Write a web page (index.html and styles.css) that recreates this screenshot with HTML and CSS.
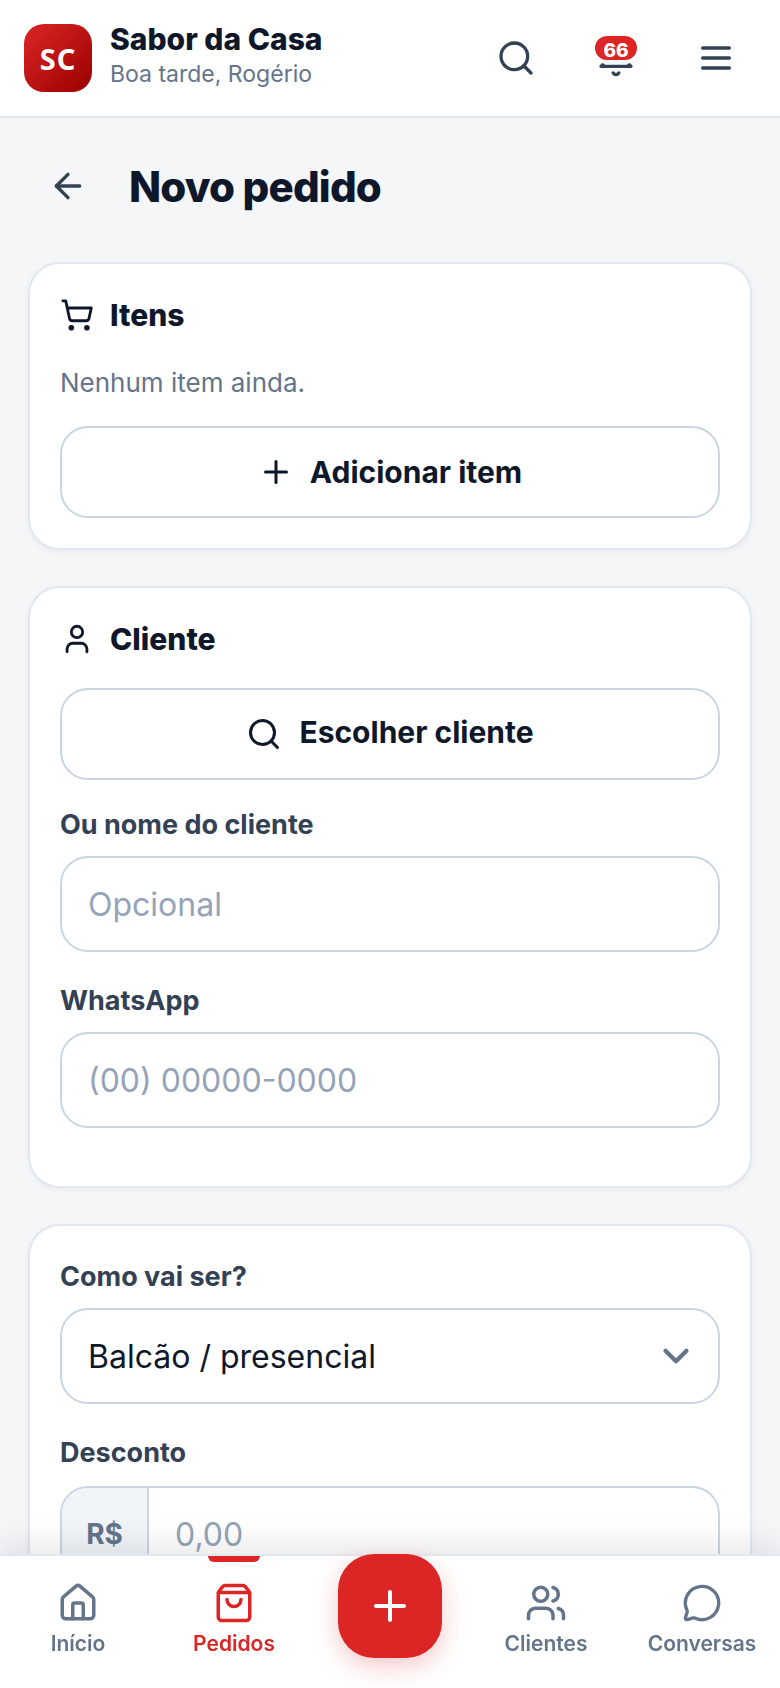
FILE: index.html
```html
<!DOCTYPE html>
<html lang="pt-BR">
<head>
<meta charset="utf-8">
<title>Novo pedido</title>
<link rel="stylesheet" href="styles.css">
</head>
<body>
<header class="topbar">
  <div class="brand">
    <div class="logo">SC</div>
    <div class="brand-text">
      <div class="brand-name">Sabor da Casa</div>
      <div class="brand-sub">Boa tarde, Rogério</div>
    </div>
  </div>
  <div class="top-actions">
    <button class="icon-btn" type="button"><svg class="ic40" viewBox="0 0 24 24"><path d="m21 21-4.34-4.34"/><circle cx="11" cy="11" r="8"/></svg></button>
    <button class="icon-btn" type="button"><svg class="ic40" viewBox="0 0 24 24"><path d="M10.3 21a1.94 1.94 0 0 0 3.4 0"/><path d="M6 8a6 6 0 0 1 12 0c0 7 3 9 3 9H3s3-2 3-9"/></svg><span class="badge">66</span></button>
    <button class="icon-btn" type="button"><svg class="ic40" viewBox="0 0 24 24"><path d="M4 6h16"/><path d="M4 12h16"/><path d="M4 18h16"/></svg></button>
  </div>
</header>

<main class="page">
  <div class="page-head">
    <button class="back" type="button"><svg class="ic40" viewBox="0 0 24 24"><path d="m12 19-7-7 7-7"/><path d="M19 12H5"/></svg></button>
    <h1>Novo pedido</h1>
  </div>

  <section class="card card-items">
    <div class="card-title"><svg class="ic34" viewBox="0 0 24 24"><circle cx="8" cy="21" r="1"/><circle cx="19" cy="21" r="1"/><path d="M2.05 2.05h2l2.66 12.42a2 2 0 0 0 2 1.58h9.78a2 2 0 0 0 1.95-1.57l1.65-7.43H5.12"/></svg><h2>Itens</h2></div>
    <p class="empty">Nenhum item ainda.</p>
    <button class="btn" type="button"><svg class="ic36" viewBox="0 0 24 24"><path d="M5 12h14"/><path d="M12 5v14"/></svg>Adicionar item</button>
  </section>

  <section class="card card-client">
    <div class="card-title"><svg class="ic34" viewBox="0 0 24 24"><path d="M19 21v-2a4 4 0 0 0-4-4H9a4 4 0 0 0-4 4v2"/><circle cx="12" cy="7" r="4"/></svg><h2>Cliente</h2></div>
    <button class="btn btn-search" type="button"><svg class="ic36" viewBox="0 0 24 24"><path d="m21 21-4.34-4.34"/><circle cx="11" cy="11" r="8"/></svg><span class="btn-text">Escolher cliente</span></button>
    <label class="label">Ou nome do cliente</label>
    <div class="field placeholder">Opcional</div>
    <label class="label">WhatsApp</label>
    <div class="field placeholder">(00) 00000-0000</div>
  </section>

  <section class="card card-order">
    <label class="label first">Como vai ser?</label>
    <div class="field select">Balcão / presencial<svg class="ic42 chev" viewBox="0 0 24 24"><path d="m6 9 6 6 6-6"/></svg></div>
    <label class="label">Desconto</label>
    <div class="group">
      <div class="prefix">R$</div>
      <div class="group-input placeholder">0,00</div>
    </div>
  </section>
</main>

<nav class="bottom-nav">
  <a class="nav-item"><svg class="ic42" viewBox="0 0 24 24"><path d="M15 21v-8a1 1 0 0 0-1-1h-4a1 1 0 0 0-1 1v8"/><path d="M3 10a2 2 0 0 1 .709-1.528l7-6a2 2 0 0 1 2.582 0l7 6A2 2 0 0 1 21 10v9a2 2 0 0 1-2 2H5a2 2 0 0 1-2-2z"/></svg><span>Início</span></a>
  <a class="nav-item active"><svg class="ic42" viewBox="0 0 24 24"><path d="M16 10a4 4 0 0 1-8 0"/><path d="M3.103 6.034h17.794"/><path d="M3.4 5.467a2 2 0 0 0-.4 1.2V20a2 2 0 0 0 2 2h14a2 2 0 0 0 2-2V6.667a2 2 0 0 0-.4-1.2l-2-2.667A2 2 0 0 0 17 2H7a2 2 0 0 0-1.6.8z"/></svg><span>Pedidos</span></a>
  <div class="nav-fab-cell"><button class="fab" type="button"><svg class="ic48" viewBox="0 0 24 24"><path d="M5 12h14"/><path d="M12 5v14"/></svg></button></div>
  <a class="nav-item"><svg class="ic42" viewBox="0 0 24 24"><path d="M16 21v-2a4 4 0 0 0-4-4H6a4 4 0 0 0-4 4v2"/><path d="M16 3.128a4 4 0 0 1 0 7.744"/><path d="M22 21v-2a4 4 0 0 0-3-3.87"/><circle cx="9" cy="7" r="4"/></svg><span>Clientes</span></a>
  <a class="nav-item"><svg class="ic40 msg" viewBox="0 0 24 24"><path d="M2.992 16.342a2 2 0 0 1 .094 1.167l-1.065 3.29a1 1 0 0 0 1.236 1.168l3.413-.998a2 2 0 0 1 1.099.092 10 10 0 1 0-4.777-4.719"/></svg><span>Conversas</span></a>
</nav>
</body>
</html>
```
FILE: styles.css
```css
* { box-sizing: border-box; }
html, body { margin: 0; padding: 0; overflow: hidden; }
body {
  width: 780px;
  height: 1688px;
  position: relative;
  background: #f5f6f8;
  font-family: Inter, "Liberation Sans", sans-serif;
  color: #0f172a;
}
svg {
  fill: none;
  stroke: currentColor;
  stroke-width: 2;
  stroke-linecap: round;
  stroke-linejoin: round;
  flex: none;
  display: block;
}
button { font-family: inherit; background: none; border: 0; padding: 0; color: inherit; }
.ic34 { width: 34px; height: 34px; }
.ic36 { width: 36px; height: 36px; }
.ic40 { width: 40px; height: 40px; }
.ic42 { width: 42px; height: 42px; }
.ic48 { width: 48px; height: 48px; }
.msg { margin: 1px 0; }

.topbar {
  height: 118px;
  background: #fff;
  border-bottom: 2px solid #e2e8f0;
  display: flex;
  align-items: center;
  justify-content: space-between;
  padding: 0 20px 0 24px;
}
.brand { display: flex; align-items: center; gap: 18px; }
.logo {
  width: 68px;
  height: 68px;
  border-radius: 20px;
  background: linear-gradient(135deg, #dc2626, #990000);
  color: #fff;
  font-family: "Noto Sans", sans-serif;
  font-size: 29px;
  font-weight: 700;
  letter-spacing: 1px;
  display: flex;
  align-items: center;
  justify-content: center;
}
.brand-text { padding-bottom: 6px; }
.brand-name { font-size: 30px; font-weight: 800; line-height: 37px; }
.brand-sub { font-size: 23px; line-height: 32px; color: #64748b; }
.top-actions { display: flex; gap: 12px; }
.icon-btn {
  position: relative;
  width: 88px;
  height: 88px;
  display: flex;
  align-items: center;
  justify-content: center;
  color: #334155;
}
.badge {
  position: absolute;
  left: 23px;
  top: 22px;
  width: 42px;
  height: 24px;
  border-radius: 12px;
  background: #dc2626;
  box-shadow: 0 0 0 4px #fff;
  color: #fff;
  font-size: 19px;
  font-weight: 800;
  line-height: 30px;
  text-align: center;
}

.page { padding: 0 28px; height: 1570px; overflow: hidden; }
.page-head {
  height: 144px;
  display: flex;
  align-items: center;
  gap: 41px;
  padding: 0 0 8px 20px;
}
.back { width: 40px; height: 40px; color: #334155; }
h1 { margin: 0; font-size: 42px; font-weight: 800; letter-spacing: -0.02em; }

.card {
  background: #fff;
  border: 2px solid #e2e8f0;
  border-radius: 32px;
  box-shadow: 0 2px 6px rgba(15, 23, 42, .05);
  padding: 25px 30px 0;
  margin-bottom: 36px;
}
.card-items { height: 288px; }
.card-client { height: 602px; }
.card-order { height: 600px; }
.card-title { display: flex; align-items: center; gap: 16px; height: 52px; color: #0f172a; }
h2 { margin: 0; font-size: 30px; font-weight: 800; }
.empty { margin: 24px 0 0; height: 61px; font-size: 26px; line-height: 36px; color: #64748b; }
.btn {
  width: 100%;
  height: 92px;
  border: 2px solid #cbd5e1;
  border-radius: 28px;
  background: #fff;
  color: #0f172a;
  font-size: 30px;
  font-weight: 700;
  display: flex;
  align-items: center;
  justify-content: center;
  gap: 16px;
}
.btn-search { margin-top: 23px; gap: 17px; }
.btn-text { padding-bottom: 4px; }
.label {
  display: block;
  margin: 29px 0 15px;
  font-size: 27px;
  font-weight: 700;
  line-height: 32px;
  color: #334155;
}
.label.first { margin-top: 10px; }
.field + .label { margin-top: 33px; }
.field {
  height: 96px;
  border: 2px solid #cbd5e1;
  border-radius: 28px;
  background: #fff;
  padding: 0 26px;
  font-size: 32px;
  display: flex;
  align-items: center;
  justify-content: space-between;
}
.placeholder { color: #94a3b8; }
.chev { color: #64748b; stroke-width: 2.4; }
.select { padding-right: 21px; color: #0f172a; }
.group {
  display: flex;
  height: 96px;
  margin-top: 17px;
  border: 2px solid #cbd5e1;
  border-radius: 28px;
  overflow: hidden;
}
.prefix {
  width: 87px;
  background: #f1f5f9;
  border-right: 2px solid #cbd5e1;
  color: #64748b;
  font-size: 28px;
  font-weight: 700;
  display: flex;
  align-items: center;
  justify-content: center;
}
.group-input { flex: 1; padding: 0 26px; font-size: 32px; display: flex; align-items: center; }

.bottom-nav {
  position: fixed;
  left: 0;
  right: 0;
  bottom: 0;
  height: 134px;
  background: #fff;
  border-top: 2px solid #e2e8f0;
  box-shadow: 0 -8px 32px rgba(15, 23, 42, .1);
  display: grid;
  grid-template-columns: repeat(5, 156px);
}
.nav-item {
  position: relative;
  display: flex;
  flex-direction: column;
  align-items: center;
  padding-top: 26px;
  color: #64748b;
  font-size: 21px;
  font-weight: 600;
  line-height: 32px;
  gap: 4px;
}
.nav-item.active { color: #dc2626; }
.nav-item.active::before {
  content: "";
  position: absolute;
  top: 0;
  left: 52px;
  width: 52px;
  height: 6px;
  background: #dc2626;
  border-radius: 0 0 6px 6px;
}
.nav-fab-cell { position: relative; }
.fab {
  position: absolute;
  left: 26px;
  top: -2px;
  width: 104px;
  height: 104px;
  border-radius: 36px;
  background: #dc2626;
  color: #fff;
  display: flex;
  align-items: center;
  justify-content: center;
  box-shadow: 0 8px 24px rgba(220, 38, 38, .25);
}
```
